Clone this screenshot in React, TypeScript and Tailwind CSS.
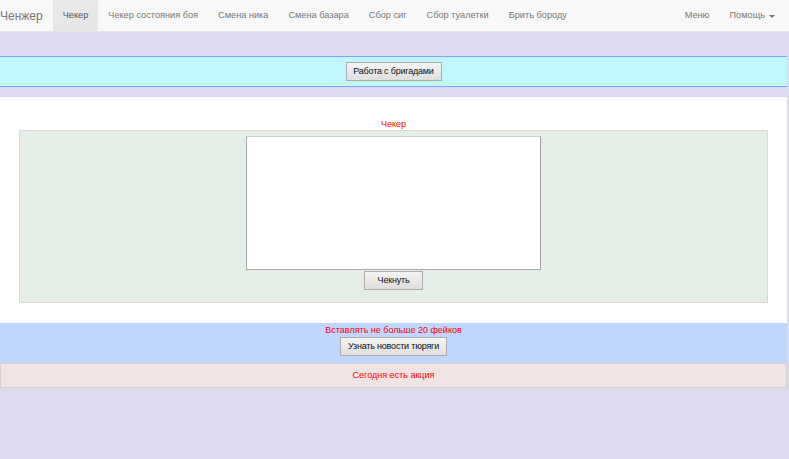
import React from 'react';

const links = ['Чекер', 'Чекер состояния боя', 'Смена ника', 'Смена базара', 'Сбор сиг', 'Сбор туалетки', 'Брить бороду'];

function Btn({ children, className = '' }: { children: React.ReactNode; className?: string }) {
  return (
    <button
      className={`h-[19px] whitespace-nowrap border border-[#acacac] bg-gradient-to-b from-[#f4f4f4] to-[#dedede] px-0 text-center text-[9px] leading-none tracking-[-0.2px] text-[#111] ${className}`}
    >
      {children}
    </button>
  );
}

export default function App() {
  return (
    <div className="min-h-[459px] w-[789px] bg-[#dcdaee] font-['Liberation_Sans',Arial,sans-serif]">
      <nav className="flex h-[32px] items-stretch border-b border-[#e4e4e4] bg-[#f8f8f8] text-[9.2px] text-[#777]">
        <span className="flex items-center pr-[10px] text-[12px]">Ченжер</span>
        {links.map((l, i) => (
          <span
            key={l}
            className={`flex items-center px-[10px] pt-[1px] ${i === 0 ? 'bg-[#e7e7e7] text-[#555]' : ''}`}
          >
            {l}
          </span>
        ))}
        <div className="ml-auto flex">
          <span className="flex items-center px-[10px] pt-[1px]">Меню</span>
          <span className="flex items-center pl-[10px] pr-[14px] pt-[1px]">
            Помощь
            <span className="ml-[4px] inline-block border-x-[3px] border-t-[3px] border-x-transparent border-t-[#777]" />
          </span>
        </div>
      </nav>

      <div className="mt-[24px] flex h-[31px] w-[787px] items-center justify-center border-y border-[#7fa6ff] bg-[#c0f6fe]">
        <Btn className="w-[96px]">Работа с бригадами</Btn>
      </div>

      <div className="mt-[10px] w-[787px] bg-white pt-[22px] pb-[20px]">
        <div className="text-center text-[9px] leading-[11px] text-[#ff0000]">Чекер</div>
        <div className="mx-[19px] flex h-[173px] flex-col items-center border border-[#d8d8d8] bg-[#e4eee6] pt-[5px]">
          <div className="h-[134px] w-[295px] border border-[#a9a9a9] border-t-[#d0d0d0] border-r-[#a0a0a0] bg-white" />
          <Btn className="mt-[1px] w-[59px]">Чекнуть</Btn>
        </div>
      </div>

      <div className="flex h-[40px] w-[787px] flex-col items-center bg-[#c0d6fe] pt-[1px]">
        <div className="text-[9px] leading-[12px] text-[#ff0000]">Вставлять не больше 20 фейков</div>
        <Btn className="mt-[1px] w-[107px]">Узнать новости тюряги</Btn>
      </div>

      <div className="flex h-[25px] w-[787px] items-center justify-center border border-[#d8cfcf] bg-[#f0e3e3] text-[9px] text-[#ff0000]">
        Сегодня есть акция
      </div>
    </div>
  );
}
